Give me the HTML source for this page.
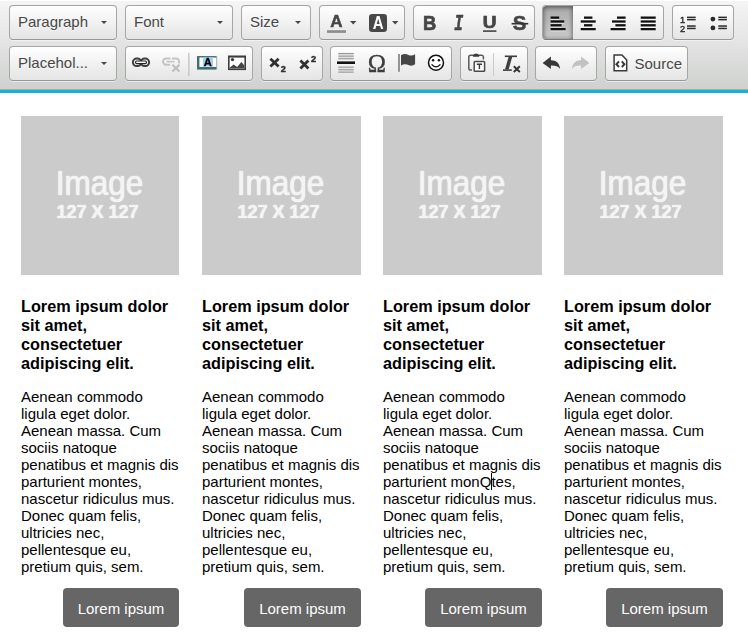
<!DOCTYPE html>
<html>
<head>
<meta charset="utf-8">
<title>Editor</title>
<style>
html,body{margin:0;padding:0;}
body{width:748px;height:638px;overflow:hidden;background:#fff;position:relative;font-family:"Liberation Sans",sans-serif;}
#top{position:absolute;left:0;top:0;width:748px;height:89px;background:#cfd1cf;background-image:linear-gradient(to bottom,#f5f5f5,#cfd1cf);box-shadow:0 1px 0 #fff inset;}
#bline{position:absolute;left:0;top:89px;width:748px;height:4px;background:#0db4dc;border-top:1px solid #b3a9a6;box-sizing:border-box;}
.g{position:absolute;height:35px;box-sizing:border-box;border:1px solid #a6a6a6;border-bottom-color:#979797;border-radius:4px;background:#e4e4e4;background-image:linear-gradient(to bottom,#ffffff,#e4e4e4);box-shadow:0 1px 0 rgba(255,255,255,.5),0 0 2px rgba(255,255,255,.15) inset,0 1px 0 rgba(255,255,255,.15) inset;}
.r1{top:5px;}
.r2{top:46px;}
.ct{position:absolute;left:8px;top:0;line-height:32px;font-size:15px;color:#474747;text-shadow:0 1px 0 rgba(255,255,255,.5);white-space:nowrap;}
.ar{position:absolute;width:0;height:0;border-left:3.3px solid transparent;border-right:3.3px solid transparent;border-top:3.3px solid #474747;}
.b{position:absolute;top:0;height:33px;width:30px;}
.b svg{position:absolute;left:5px;top:6px;width:20px;height:20px;overflow:visible;}
.on{background:#b5b5b5;background-image:linear-gradient(to bottom,#aaa,#cacaca);box-shadow:0 1px 5px rgba(0,0,0,.6) inset,0 1px 0 rgba(0,0,0,.2);border-radius:3px 0 0 3px;}
.sep{position:absolute;top:6px;width:1px;height:20px;background:#c0c0c0;box-shadow:1px 0 1px rgba(255,255,255,.5);}
.col{position:absolute;top:116px;width:159px;}
.img{position:absolute;left:0;top:0;width:100%;height:159px;background:#cbcbcb;color:#f4f4f4;}
.img .t1{position:absolute;left:34.7px;top:50.1px;font-size:31.55px;line-height:36px;transform:scaleY(1.09);transform-origin:0 28.9px;text-align:left;text-shadow:0 0 1px #f6f6f6,0 0 1px #f6f6f6;}
.img .t2{position:absolute;left:35.5px;top:86.3px;font-size:18px;line-height:20px;font-weight:bold;letter-spacing:0;transform:scaleY(1.05);transform-origin:0 16px;text-align:left;white-space:nowrap;text-shadow:0 0 1px #f6f6f6,0 0 1px #f6f6f6;}
.h{position:absolute;left:0;top:181px;width:170px;white-space:nowrap;font-size:16.25px;font-weight:bold;line-height:19px;color:#000;}
.p{position:absolute;left:0;top:272px;width:170px;white-space:nowrap;font-size:15px;line-height:17px;color:#000;}
.btn{position:absolute;right:0;top:472px;width:117px;height:39px;border-radius:4px;background:#666;color:#fff;font-size:15px;line-height:41px;text-align:center;}
#caret{display:inline-block;width:0;height:17px;vertical-align:top;position:relative;}
#caret::after{content:"";position:absolute;left:-0.4px;top:-0.5px;width:1px;height:17.5px;background:#000;}
</style>
</head>
<body>
<div id="top"></div>
<div id="bline"></div>

<!-- row 1 -->
<div class="g r1" style="left:9px;width:108px;"><span class="ct">Paragraph</span><span class="ar" style="left:91px;top:15px;"></span></div>
<div class="g r1" style="left:125px;width:108px;"><span class="ct">Font</span><span class="ar" style="left:91px;top:15px;"></span></div>
<div class="g r1" style="left:241px;width:70px;"><span class="ct">Size</span><span class="ar" style="left:53px;top:15px;"></span></div>
<div class="g r1" id="gcolor" style="left:319px;width:86px;"></div>
<div class="g r1" id="gbius" style="left:413px;width:122px;"></div>
<div class="g r1" id="galign" style="left:542px;width:122px;"><div class="b on" style="left:0;"></div></div>
<div class="g r1" id="glist" style="left:672px;width:62px;"></div>

<!-- row 2 -->
<div class="g r2" style="left:9px;width:108px;"><span class="ct">Placehol...</span><span class="ar" style="left:91px;top:15px;"></span></div>
<div class="g r2" id="g21" style="left:125px;width:128px;"></div>
<div class="g r2" id="g22" style="left:261px;width:62px;"></div>
<div class="g r2" id="g23" style="left:330px;width:122px;"></div>
<div class="g r2" id="g24" style="left:460px;width:68px;"></div>
<div class="g r2" id="g25" style="left:535px;width:62px;"></div>
<div class="g r2" id="g26" style="left:605px;width:83px;"><span class="ct" style="left:28.5px;line-height:33px;">Source</span></div>


<svg id="icons" width="748" height="89" viewBox="0 0 748 89" style="position:absolute;left:0;top:0;will-change:transform;font-family:'Liberation Sans',sans-serif;">
<!-- text color -->
<g id="i-textcolor">
<text x="336.5" y="27.4" font-size="17" font-weight="bold" text-anchor="middle" fill="#464646" stroke="#464646" stroke-width="0.5">A</text>
<rect x="327" y="30.2" width="19" height="2.7" fill="#8e8e8e"/>
<polygon points="350,21 356.4,21 353.2,24.4" fill="#474747"/>
</g>
<!-- bg color -->
<g id="i-bgcolor">
<rect x="369" y="14" width="18" height="18" rx="3.2" fill="#484848"/>
<text transform="translate(378.2,29.2) scale(0.86,1)" font-size="17.5" font-weight="bold" text-anchor="middle" fill="#fff">A</text>
<polygon points="392,21 398.4,21 395.2,24.4" fill="#474747"/>
</g>
<!-- B I U S -->
<g id="i-bius" fill="#454545" stroke="#454545" stroke-width="0.7">
<text transform="translate(429.6,29.8) scale(0.9,1)" font-size="20.4" font-weight="bold" text-anchor="middle">B</text>
<text transform="translate(458.7,29.9) scale(0.66,1)" font-size="22.4" font-weight="bold" font-style="italic" text-anchor="middle" font-family="'Liberation Mono',monospace" stroke-width="0.7">I</text>
<text transform="translate(489.7,28) scale(1.14,1)" font-size="16.7" font-weight="bold" text-anchor="middle">U</text>
<rect x="483" y="30.3" width="13.4" height="1.6" stroke="none"/>
<text x="519.5" y="29.8" font-size="20.4" font-weight="bold" text-anchor="middle" stroke-width="0.5">S</text>
<rect x="511.6" y="22.9" width="16.6" height="1.6" fill="#333" stroke="none"/>
</g>
<!-- align -->
<g id="i-align" fill="#111">
<rect x="550.6" y="18.70" width="8.6" height="1.1" fill="#fff" fill-opacity="0.75"/><rect x="550.6" y="16.50" width="8.6" height="2.3"/><rect x="550.6" y="22.55" width="13.6" height="1.1" fill="#fff" fill-opacity="0.75"/><rect x="550.6" y="20.35" width="13.6" height="2.3"/><rect x="550.6" y="26.35" width="11.0" height="1.1" fill="#fff" fill-opacity="0.75"/><rect x="550.6" y="24.15" width="11.0" height="2.3"/><rect x="550.6" y="30.20" width="15.0" height="1.1" fill="#fff" fill-opacity="0.75"/><rect x="550.6" y="28.00" width="15.0" height="2.3"/>
<rect x="584.0" y="18.70" width="8.4" height="1.1" fill="#fff" fill-opacity="0.75"/><rect x="584.0" y="16.50" width="8.4" height="2.3"/><rect x="580.7" y="22.55" width="15.0" height="1.1" fill="#fff" fill-opacity="0.75"/><rect x="580.7" y="20.35" width="15.0" height="2.3"/><rect x="584.0" y="26.35" width="8.4" height="1.1" fill="#fff" fill-opacity="0.75"/><rect x="584.0" y="24.15" width="8.4" height="2.3"/><rect x="580.7" y="30.20" width="15.0" height="1.1" fill="#fff" fill-opacity="0.75"/><rect x="580.7" y="28.00" width="15.0" height="2.3"/>
<rect x="617.0" y="18.70" width="8.6" height="1.1" fill="#fff" fill-opacity="0.75"/><rect x="617.0" y="16.50" width="8.6" height="2.3"/><rect x="612.0" y="22.55" width="13.6" height="1.1" fill="#fff" fill-opacity="0.75"/><rect x="612.0" y="20.35" width="13.6" height="2.3"/><rect x="615.4" y="26.35" width="10.2" height="1.1" fill="#fff" fill-opacity="0.75"/><rect x="615.4" y="24.15" width="10.2" height="2.3"/><rect x="610.6" y="30.20" width="15.0" height="1.1" fill="#fff" fill-opacity="0.75"/><rect x="610.6" y="28.00" width="15.0" height="2.3"/>
<rect x="640.7" y="18.70" width="15.0" height="1.1" fill="#fff" fill-opacity="0.75"/><rect x="640.7" y="16.50" width="15.0" height="2.3"/><rect x="640.7" y="22.55" width="15.0" height="1.1" fill="#fff" fill-opacity="0.75"/><rect x="640.7" y="20.35" width="15.0" height="2.3"/><rect x="640.7" y="26.35" width="15.0" height="1.1" fill="#fff" fill-opacity="0.75"/><rect x="640.7" y="24.15" width="15.0" height="2.3"/><rect x="640.7" y="30.20" width="15.0" height="1.1" fill="#fff" fill-opacity="0.75"/><rect x="640.7" y="28.00" width="15.0" height="2.3"/>
</g>
<!-- lists -->
<g id="i-lists" fill="#2b2b2b">
<text x="685.2" y="22.9" font-size="9.2" text-anchor="end" stroke="#2b2b2b" stroke-width="0.4">1</text>
<text x="685.2" y="32" font-size="9.2" text-anchor="end" stroke="#2b2b2b" stroke-width="0.4">2</text>
<rect x="687" y="16.6" width="8.7" height="1.5"/><rect x="687" y="18.9" width="8.7" height="1.5"/>
<rect x="687" y="25.3" width="8.7" height="1.5"/><rect x="687" y="27.7" width="8.7" height="1.5"/>
<circle cx="712.9" cy="19.1" r="2.4"/><circle cx="712.9" cy="27.9" r="2.4"/>
<rect x="718.3" y="16.6" width="8.6" height="1.5"/><rect x="718.3" y="18.9" width="8.6" height="1.5"/>
<rect x="718.3" y="25.3" width="8.6" height="1.5"/><rect x="718.3" y="27.7" width="8.6" height="1.5"/>
</g>
<!-- link -->
<g id="i-link" fill="none">
<g stroke="#3e3e3e" stroke-width="2">
<rect x="132.9" y="58.5" width="8.3" height="7.6" rx="3.8"/>
<rect x="140.8" y="58.5" width="8.3" height="7.6" rx="3.8"/>
</g>
<rect x="135.5" y="61" width="11" height="2.6" rx="1.3" fill="#fff" stroke="#222" stroke-width="1.1"/>
</g>
<!-- unlink -->
<g id="i-unlink" fill="none" stroke="#c3c3c3" stroke-width="2">
<path d="M170,64.8 H166.2 a3.2,3.2 0 0 1 0,-6.4 H170.5"/>
<path d="M172,58.4 H176 a3.2,3.2 0 0 1 2.6,5"/>
<path d="M166.5,61.6 H174.5" stroke-width="1.6"/>
<path d="M172.4,64.8 L179.4,71.4 M179.4,64.8 L172.4,71.4" stroke="#bdbdbd" stroke-width="2.1"/>
</g>
<rect x="188.3" y="53" width="1.2" height="23" fill="#bdbdbd"/>
<!-- A box -->
<g id="i-abox">
<rect x="197" y="56.1" width="20.2" height="13.4" fill="#a9b4b4"/>
<rect x="197" y="56.1" width="19.3" height="13.4" fill="#3f6f70"/>
<rect x="199.4" y="57.5" width="16.9" height="9.4" fill="#fff"/>
<rect x="202.8" y="57.5" width="10.2" height="9" fill="#a7cdf4"/>
<text transform="translate(207.8,66.1) scale(1.05,1)" font-size="10.6" font-weight="bold" text-anchor="middle" fill="#000" stroke="#000" stroke-width="0.3">A</text>
</g>
<!-- image -->
<g id="i-image">
<rect x="228" y="55.5" width="18" height="14.6" fill="#3c3c3c"/>
<rect x="229.6" y="57.6" width="14.8" height="11" fill="#fff"/>
<circle cx="232.5" cy="59.6" r="1.7" fill="#3c3c3c"/>
<polygon points="229.6,68.6 229.6,67.8 233.6,64.4 237.2,67 241.3,62 244.4,65.6 244.4,68.6" fill="#444"/>
</g>
<!-- sub / sup -->
<g id="i-subsup" fill="none" stroke="#303030" stroke-width="2.8">
<path d="M270.4,58.8 L278.6,66.6 M278.6,58.8 L270.4,66.6"/>
<path d="M300.4,60.6 L308.4,68.4 M308.4,60.6 L300.4,68.4"/>
</g>
<text x="283.4" y="72" font-size="9.2" font-weight="bold" text-anchor="middle" fill="#303030" stroke="#303030" stroke-width="0.4">2</text>
<text x="313.5" y="62.1" font-size="9.2" font-weight="bold" text-anchor="middle" fill="#303030" stroke="#303030" stroke-width="0.4">2</text>
<!-- hr -->
<g id="i-hr">
<rect x="338.3" y="52.8" width="15.4" height="6.6" fill="#e4e4e4"/>
<rect x="338.3" y="53" width="15.4" height="1.1" fill="#979797"/><rect x="338.3" y="55.6" width="15.4" height="1.1" fill="#979797"/><rect x="338.3" y="58.2" width="15.4" height="1.1" fill="#979797"/>
<rect x="337" y="61.4" width="18" height="2.6" fill="#111"/>
<rect x="338.3" y="66.4" width="15.4" height="6.4" fill="#e4e4e4"/>
<rect x="338.3" y="66.6" width="15.4" height="1.1" fill="#979797"/><rect x="338.3" y="69.2" width="15.4" height="1.1" fill="#979797"/><rect x="338.3" y="71.6" width="15.4" height="1.1" fill="#979797"/>
</g>
<!-- omega -->
<text x="376.8" y="71.7" font-size="24.6" text-anchor="middle" fill="#3c3c3c" stroke="#3c3c3c" stroke-width="0.35" font-family="'Liberation Serif','DejaVu Serif',serif">Ω</text>
<!-- flag -->
<g id="i-flag">
<rect x="398.1" y="54" width="1.8" height="17.8" fill="#8a8a8a"/>
<path d="M401,55.2 C404,53.4 406.5,54 408.5,55 C410.8,56.1 413,55.6 415.1,54.2 L415.1,64.3 C413,65.7 410.8,66.1 408.5,65 C406.5,64 404,63.6 401,65.4 Z" fill="#474747"/>
</g>
<!-- smiley -->
<g id="i-smiley">
<circle cx="436" cy="62.7" r="7.5" fill="#fff" stroke="#111" stroke-width="1.5"/>
<circle cx="433.1" cy="60.2" r="1.25" fill="#111"/><circle cx="438.9" cy="60.2" r="1.25" fill="#111"/>
<path d="M431.6,64.4 Q436,69.4 440.4,64.4" fill="none" stroke="#111" stroke-width="1.4"/>
</g>
<!-- paste text -->
<g id="i-pastetext" fill="none" stroke="#4a4a4a" stroke-width="1.5">
<path d="M472,70 H470.6 a1.8,1.8 0 0 1 -1.8,-1.8 V57 a1.8,1.8 0 0 1 1.8,-1.8 H481.6 a1.8,1.8 0 0 1 1.8,1.8 V59.4" stroke="#5a5a5a"/>
<path d="M473.2,56.2 C473.4,53.4 478.8,53.4 479,56.2 Z" fill="#3a3a3a" stroke="#3a3a3a" stroke-width="1"/>
<rect x="474.2" y="61.4" width="10.4" height="9.8" rx="0.8" fill="#fff"/>
<path d="M476.8,64.2 H482 M479.4,64.2 V69" stroke="#3a3a3a" stroke-width="1.4"/>
</g>
<rect x="493" y="53" width="1" height="23" fill="#c9c9c9"/>
<!-- remove format -->
<g id="i-removeformat" fill="#3e3e3e">
<rect x="504.8" y="55.5" width="12.2" height="1.6"/>
<polygon points="508.6,57 512.2,57 508.6,69.4 505,69.4"/>
<rect x="503" y="69.3" width="8.8" height="1.6"/>
<path d="M513.8,66.3 L519.8,72 M519.8,66.3 L513.8,72" stroke="#333" stroke-width="1.9" fill="none"/>
</g>
<!-- undo / redo -->
<path id="i-undo" d="M542.6,62.9 L550.9,56.6 L550.9,60.2 C556.5,60.2 559.6,63.4 560.1,68.9 C558,65.8 555.2,65.3 550.9,65.4 L550.9,69.1 Z" fill="#383838"/>
<path id="i-redo" d="M589.4,62.9 L581.1,56.6 L581.1,60.2 C575.5,60.2 572.4,63.4 571.9,68.9 C574,65.8 576.8,65.3 581.1,65.4 L581.1,69.1 Z" fill="#c2c2c2"/>
<!-- source -->
<g id="i-source" fill="none" stroke="#3a3a3a" stroke-width="1.5">
<path d="M614.1,55 H622 L626.7,60 V70.7 H614.1 Z" fill="#fff"/>
<path d="M619,61.4 L616.4,64.2 L619,67 M621.8,61.4 L624.4,64.2 L621.8,67" stroke-width="2"/>
</g>
</svg>

<!-- content -->
<div class="col" style="left:21px;width:158px;">
  <div class="img"><div class="t1">Image</div><div class="t2">127 X 127</div></div>
  <div class="h">Lorem ipsum dolor<br>sit amet,<br>consectetuer<br>adipiscing elit.</div>
  <div class="p">Aenean commodo<br>ligula eget dolor.<br>Aenean massa. Cum<br>sociis natoque<br>penatibus et magnis dis<br>parturient montes,<br>nascetur ridiculus mus.<br>Donec quam felis,<br>ultricies nec,<br>pellentesque eu,<br>pretium quis, sem.</div>
  <div class="btn" style="width:116px;">Lorem ipsum</div>
</div>
<div class="col" style="left:202px;">
  <div class="img"><div class="t1">Image</div><div class="t2">127 X 127</div></div>
  <div class="h">Lorem ipsum dolor<br>sit amet,<br>consectetuer<br>adipiscing elit.</div>
  <div class="p">Aenean commodo<br>ligula eget dolor.<br>Aenean massa. Cum<br>sociis natoque<br>penatibus et magnis dis<br>parturient montes,<br>nascetur ridiculus mus.<br>Donec quam felis,<br>ultricies nec,<br>pellentesque eu,<br>pretium quis, sem.</div>
  <div class="btn">Lorem ipsum</div>
</div>
<div class="col" style="left:383px;">
  <div class="img"><div class="t1">Image</div><div class="t2">127 X 127</div></div>
  <div class="h">Lorem ipsum dolor<br>sit amet,<br>consectetuer<br>adipiscing elit.</div>
  <div class="p">Aenean commodo<br>ligula eget dolor.<br>Aenean massa. Cum<br>sociis natoque<br>penatibus et magnis dis<br>parturient monQ<span id="caret"></span>tes,<br>nascetur ridiculus mus.<br>Donec quam felis,<br>ultricies nec,<br>pellentesque eu,<br>pretium quis, sem.</div>
  <div class="btn">Lorem ipsum</div>
</div>
<div class="col" style="left:564px;">
  <div class="img"><div class="t1">Image</div><div class="t2">127 X 127</div></div>
  <div class="h">Lorem ipsum dolor<br>sit amet,<br>consectetuer<br>adipiscing elit.</div>
  <div class="p">Aenean commodo<br>ligula eget dolor.<br>Aenean massa. Cum<br>sociis natoque<br>penatibus et magnis dis<br>parturient montes,<br>nascetur ridiculus mus.<br>Donec quam felis,<br>ultricies nec,<br>pellentesque eu,<br>pretium quis, sem.</div>
  <div class="btn">Lorem ipsum</div>
</div>
</body>
</html>
